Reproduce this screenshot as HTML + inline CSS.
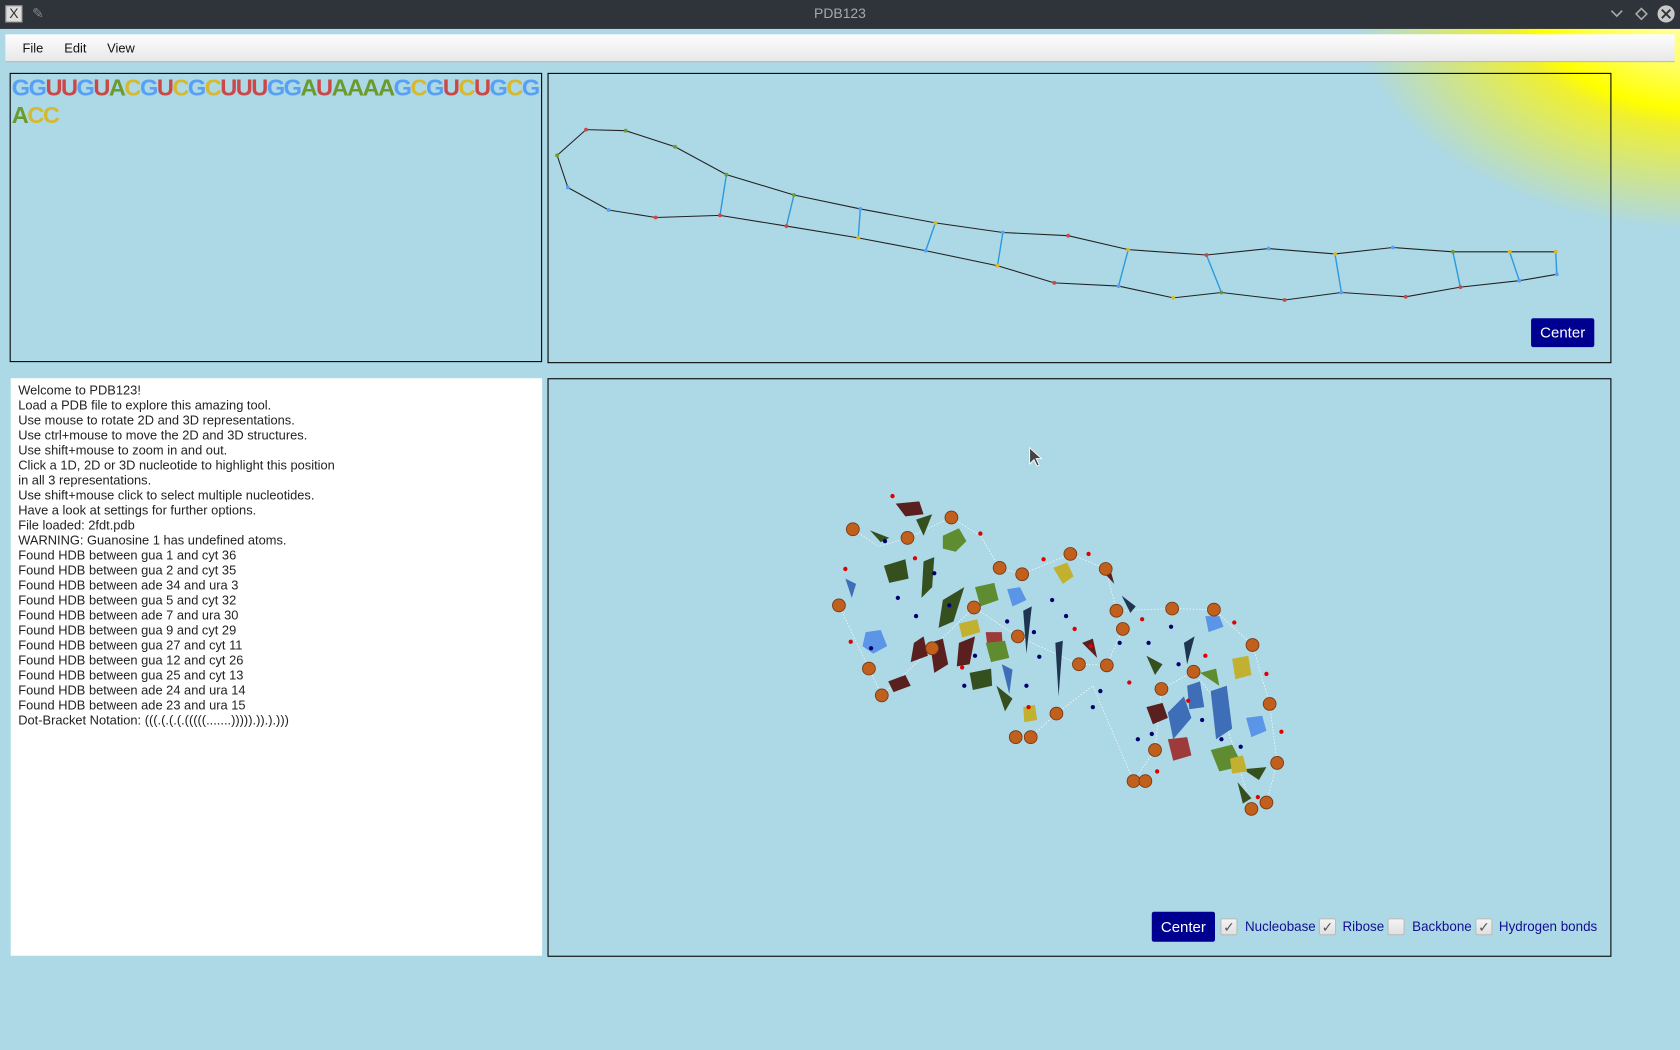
<!DOCTYPE html>
<html><head><meta charset="utf-8"><style>
*{margin:0;padding:0;box-sizing:border-box}
html,body{width:1680px;height:1050px;overflow:hidden;background:#add8e6;font-family:"Liberation Sans","DejaVu Sans",sans-serif}
#w{position:absolute;left:0;top:0;width:1568px;height:980px;transform:scale(1.071429);transform-origin:0 0;background:#add8e6;overflow:hidden}
.abs{position:absolute}
#title{left:0;top:0;width:1568px;height:27px;background:#2f343a;color:#a5a9ad;font-size:13px;text-align:center;line-height:26px;z-index:5}
#menu{left:5px;top:32px;width:1558px;height:26px;background:linear-gradient(#fdfdfd,#e8e8e8);border-bottom:1px solid #bbb;font-size:12px;color:#111;z-index:5}
#menu span{position:absolute;top:6px}
.panel{border:1px solid #000}
#seq{left:9px;top:68px;width:497px;height:270px}
#seq div{position:absolute;left:1px;font-weight:bold;font-size:22px;white-space:nowrap;letter-spacing:-1.4px}
.G{color:#58a0f5}.U{color:#cc4848}.A{color:#6b9a2e}.C{color:#d6b92e}
#log{left:10px;top:353px;width:496px;height:539px;background:#fff;font-size:12px;line-height:14px;padding:4px 0 0 7px;color:#222;white-space:pre}
.btn{background:#000090;color:#fff;font-size:14px;text-align:center;border-radius:2px}
.cb{width:16px;height:16px;border:1px solid #bbb;background:linear-gradient(#f4f4f4,#e0e0e0);border-radius:2px;font-size:13px;color:#555;text-align:center;line-height:15px}
.lbl{color:#101090;font-size:12.5px}
</style></head><body><div id="w">
<div class="abs" style="left:0;top:0;width:1568px;height:400px;background:radial-gradient(ellipse 330px 215px at 1590px 0px,#ffffd0 0%,#ffff60 30%,#ffff00 48%,#f0f030 55%,rgba(173,216,230,0) 100%)"></div>
<div id="title" class="abs">PDB123
<div class="abs" style="left:5px;top:5px;width:16px;height:16px;background:#ddd;border:1px solid #999;color:#333;font-size:13px;line-height:14px">X</div>
<div class="abs" style="left:30px;top:0;color:#888;font-size:13px">✎</div>
<svg class="abs" style="left:1500px;top:4px" width="66" height="20"><path d="M4 6l5 5 5-5" stroke="#aaa" fill="none" stroke-width="1.5"/><path d="M32 4l5 5-5 5-5-5z" stroke="#aaa" fill="none" stroke-width="1.5"/><circle cx="55" cy="9" r="8" fill="#c8c8c8"/><path d="M51 5l8 8M59 5l-8 8" stroke="#2f343a" stroke-width="1.8"/></svg>
</div>
<div id="menu" class="abs"><span style="left:16px">File</span><span style="left:55px">Edit</span><span style="left:95px">View</span></div>

<div id="seq" class="abs panel">
<div style="top:0px"><span class="G">GG</span><span class="U">UU</span><span class="G">G</span><span class="U">U</span><span class="A">A</span><span class="C">C</span><span class="G">G</span><span class="U">U</span><span class="C">C</span><span class="G">G</span><span class="C">C</span><span class="U">UUU</span><span class="G">GG</span><span class="A">A</span><span class="U">U</span><span class="A">AAAA</span><span class="G">G</span><span class="C">C</span><span class="G">G</span><span class="U">U</span><span class="C">C</span><span class="U">U</span><span class="G">G</span><span class="C">C</span><span class="G">G</span></div>
<div style="top:26px"><span class="A">A</span><span class="C">CC</span></div>
</div>

<div class="abs panel" style="left:511px;top:68px;width:993px;height:271px"></div>
<svg class="abs" style="left:0;top:0" width="1568" height="980">
<g fill="none" stroke="#222" stroke-width="1">
<polyline points="520,145 547,121 584,122 630,137 678,163 741,182 803,195 873,208 936,217 997,220 1053,233 1126,238 1184,232 1246,237 1300,231 1356,235 1409,235 1452,235"/>
<polyline points="520,145 530,175 568,196 612,203 672,201 734,211 801,222 864,234 931,248 984,264 1044,267 1095,278 1140,273 1199,280 1252,273 1312,277 1363,268 1418,262 1453,256"/>
</g>
<g stroke="#2a9ae0" stroke-width="1.3">
<line x1="678" y1="163" x2="672" y2="201"/><line x1="741" y1="182" x2="734" y2="211"/><line x1="803" y1="195" x2="801" y2="222"/><line x1="873" y1="208" x2="864" y2="234"/><line x1="936" y1="217" x2="931" y2="248"/><line x1="1053" y1="233" x2="1044" y2="267"/><line x1="1126" y1="238" x2="1140" y2="273"/><line x1="1246" y1="237" x2="1252" y2="273"/><line x1="1356" y1="235" x2="1363" y2="268"/><line x1="1409" y1="235" x2="1418" y2="262"/><line x1="1452" y1="235" x2="1453" y2="256"/>
</g>
<g>
<circle cx="520" cy="145" r="1.8" fill="#6b9a2e"/><circle cx="547" cy="121" r="1.8" fill="#cc4848"/><circle cx="584" cy="122" r="1.8" fill="#6b9a2e"/><circle cx="630" cy="137" r="1.8" fill="#6b9a2e"/><circle cx="678" cy="163" r="1.8" fill="#6b9a2e"/><circle cx="741" cy="182" r="1.8" fill="#6b9a2e"/><circle cx="803" cy="195" r="1.8" fill="#58a0f5"/><circle cx="873" cy="208" r="1.8" fill="#d6b92e"/><circle cx="936" cy="217" r="1.8" fill="#58a0f5"/><circle cx="997" cy="220" r="1.8" fill="#cc4848"/><circle cx="1053" cy="233" r="1.8" fill="#d6b92e"/><circle cx="1126" cy="238" r="1.8" fill="#cc4848"/><circle cx="1184" cy="232" r="1.8" fill="#58a0f5"/><circle cx="1246" cy="237" r="1.8" fill="#d6b92e"/><circle cx="1300" cy="231" r="1.8" fill="#58a0f5"/><circle cx="1356" cy="235" r="1.8" fill="#6b9a2e"/><circle cx="1409" cy="235" r="1.8" fill="#d6b92e"/><circle cx="1452" cy="235" r="1.8" fill="#d6b92e"/>
<circle cx="530" cy="175" r="1.8" fill="#58a0f5"/><circle cx="568" cy="196" r="1.8" fill="#58a0f5"/><circle cx="612" cy="203" r="1.8" fill="#cc4848"/><circle cx="672" cy="201" r="1.8" fill="#cc4848"/><circle cx="734" cy="211" r="1.8" fill="#cc4848"/><circle cx="801" cy="222" r="1.8" fill="#d6b92e"/><circle cx="864" cy="234" r="1.8" fill="#58a0f5"/><circle cx="931" cy="248" r="1.8" fill="#d6b92e"/><circle cx="984" cy="264" r="1.8" fill="#cc4848"/><circle cx="1044" cy="267" r="1.8" fill="#58a0f5"/><circle cx="1095" cy="278" r="1.8" fill="#d6b92e"/><circle cx="1140" cy="273" r="1.8" fill="#6b9a2e"/><circle cx="1199" cy="280" r="1.8" fill="#cc4848"/><circle cx="1252" cy="273" r="1.8" fill="#58a0f5"/><circle cx="1312" cy="277" r="1.8" fill="#cc4848"/><circle cx="1363" cy="268" r="1.8" fill="#cc4848"/><circle cx="1418" cy="262" r="1.8" fill="#58a0f5"/><circle cx="1453" cy="256" r="1.8" fill="#58a0f5"/>
</g>
</svg>
<div class="abs btn" style="left:1429px;top:297px;width:59px;height:27px;line-height:27px">Center</div>

<div id="log" class="abs">Welcome to PDB123!
Load a PDB file to explore this amazing tool.
Use mouse to rotate 2D and 3D representations.
Use ctrl+mouse to move the 2D and 3D structures.
Use shift+mouse to zoom in and out.
Click a 1D, 2D or 3D nucleotide to highlight this position
in all 3 representations.
Use shift+mouse click to select multiple nucleotides.
Have a look at settings for further options.
File loaded: 2fdt.pdb
WARNING: Guanosine 1 has undefined atoms.
Found HDB between gua 1 and cyt 36
Found HDB between gua 2 and cyt 35
Found HDB between ade 34 and ura 3
Found HDB between gua 5 and cyt 32
Found HDB between ade 7 and ura 30
Found HDB between gua 9 and cyt 29
Found HDB between gua 27 and cyt 11
Found HDB between gua 12 and cyt 26
Found HDB between gua 25 and cyt 13
Found HDB between ade 24 and ura 14
Found HDB between ade 23 and ura 15
Dot-Bracket Notation: (((.(.(.(.(((((.......))))).)).).)))</div>

<div class="abs panel" style="left:511px;top:353px;width:993px;height:540px"></div>
<svg class="abs" style="left:0;top:0" width="1568" height="980">
<path d="M961 418v15l4-4 3 6 2-1-3-6h5z" fill="#444" stroke="#fff" stroke-width="0.8"/>
<g stroke="#fff" stroke-width="0.6" stroke-dasharray="1.5 1.5" fill="none">
<polyline points="796,494 820,510 847,502 888,483 915,500 933,530 954,536 999,517 1032,531 1042,570 1094,568 1133,569 1169,602 1185,657 1192,712 1182,749"/>
<polyline points="783,565 811,624 823,649 870,605 909,567 950,594 1007,620 1033,621 1048,587"/>
<polyline points="948,688 962,688 986,666 1020,640 1058,729 1078,700 1084,643 1114,627 1140,660 1168,755"/>
</g>
<g fill="#5a2020"><polygon points="836,470 858,468 862,480 845,482"/><polygon points="853,600 862,594 866,612 850,618"/><polygon points="868,600 880,596 885,620 872,628"/><polygon points="829,636 845,630 850,640 834,646"/><polygon points="1070,660 1085,656 1090,670 1076,676"/><polygon points="1026,530 1035,527 1040,545"/><polygon points="1010,600 1020,596 1024,614"/><polygon points="895,600 910,594 905,620 893,622"/></g>
<g fill="#9e3a3a"><polygon points="1090,690 1108,688 1112,705 1095,710"/><polygon points="920,590 935,590 936,605 922,606"/></g>
<g fill="#354f1e"><polygon points="825,528 845,522 848,540 830,544"/><polygon points="862,524 872,520 870,548 860,558"/><polygon points="880,560 900,548 890,580 876,586"/><polygon points="905,628 925,624 926,640 908,644"/><polygon points="855,485 870,480 862,500"/><polygon points="812,495 830,502 822,506"/><polygon points="930,640 945,652 938,664"/><polygon points="1155,730 1168,745 1160,750"/><polygon points="1160,718 1182,716 1175,728"/><polygon points="1070,612 1085,620 1078,630"/></g>
<g fill="#5f8c30"><polygon points="880,500 895,493 902,505 892,515 880,512"/><polygon points="910,548 928,544 932,560 915,566"/><polygon points="920,600 938,598 942,614 925,618"/><polygon points="1130,700 1150,695 1160,715 1138,720"/><polygon points="1120,628 1135,624 1138,640"/></g>
<g fill="#c2b030"><polygon points="983,530 996,525 1002,538 992,545"/><polygon points="1150,615 1165,612 1168,630 1153,634"/><polygon points="895,582 912,578 915,590 898,595"/><polygon points="955,660 966,658 968,672 956,674"/><polygon points="1148,708 1160,705 1164,720 1150,722"/></g>
<g fill="#5a95e8"><polygon points="808,590 822,588 828,603 815,610 805,603"/><polygon points="940,550 952,548 958,560 945,566"/><polygon points="1163,670 1178,668 1182,682 1168,688"/><polygon points="1125,575 1138,575 1142,585 1128,590"/></g>
<g fill="#3f6eb8"><polygon points="1090,665 1105,650 1112,670 1095,690"/><polygon points="1130,645 1145,640 1150,680 1135,690"/><polygon points="1108,640 1120,636 1124,660 1110,662"/><polygon points="789,540 799,545 795,558"/><polygon points="935,620 945,625 942,648"/></g>
<g fill="#1e3450"><polygon points="955,570 963,566 958,610"/><polygon points="985,600 992,598 988,650"/><polygon points="1047,556 1060,566 1055,572"/><polygon points="1105,600 1115,594 1108,620"/></g>
<g fill="#c0601c" stroke="#7a3510" stroke-width="0.8">
<circle cx="796" cy="494" r="6"/><circle cx="888" cy="483" r="6"/><circle cx="847" cy="502" r="6"/><circle cx="933" cy="530" r="6"/><circle cx="954" cy="536" r="6"/><circle cx="999" cy="517" r="6"/><circle cx="1032" cy="531" r="6"/><circle cx="783" cy="565" r="6"/><circle cx="811" cy="624" r="6"/><circle cx="823" cy="649" r="6"/><circle cx="870" cy="605" r="6"/><circle cx="909" cy="567" r="6"/><circle cx="950" cy="594" r="6"/><circle cx="1007" cy="620" r="6"/><circle cx="1033" cy="621" r="6"/><circle cx="948" cy="688" r="6"/><circle cx="962" cy="688" r="6"/><circle cx="986" cy="666" r="6"/><circle cx="1042" cy="570" r="6"/><circle cx="1048" cy="587" r="6"/><circle cx="1094" cy="568" r="6"/><circle cx="1133" cy="569" r="6"/><circle cx="1169" cy="602" r="6"/><circle cx="1185" cy="657" r="6"/><circle cx="1192" cy="712" r="6"/><circle cx="1182" cy="749" r="6"/><circle cx="1168" cy="755" r="6"/><circle cx="1058" cy="729" r="6"/><circle cx="1069" cy="729" r="6"/><circle cx="1078" cy="700" r="6"/><circle cx="1084" cy="643" r="6"/><circle cx="1114" cy="627" r="6"/>
</g>
<g fill="#e00000">
<circle cx="833" cy="463" r="2"/><circle cx="854" cy="521" r="2"/><circle cx="789" cy="531" r="2"/><circle cx="794" cy="599" r="2"/><circle cx="915" cy="498" r="2"/><circle cx="1016" cy="517" r="2"/><circle cx="974" cy="522" r="2"/><circle cx="1003" cy="587" r="2"/><circle cx="1018" cy="603" r="2"/><circle cx="1066" cy="578" r="2"/><circle cx="1152" cy="581" r="2"/><circle cx="1182" cy="629" r="2"/><circle cx="1196" cy="683" r="2"/><circle cx="1080" cy="720" r="2"/><circle cx="1054" cy="637" r="2"/><circle cx="960" cy="660" r="2"/><circle cx="898" cy="623" r="2"/><circle cx="1174" cy="744" r="2"/><circle cx="1109" cy="654" r="2"/><circle cx="1125" cy="612" r="2"/>
</g>
<g fill="#00006e">
<circle cx="826" cy="505" r="2"/><circle cx="872" cy="535" r="2"/><circle cx="838" cy="558" r="2"/><circle cx="886" cy="565" r="2"/><circle cx="910" cy="612" r="2"/><circle cx="940" cy="580" r="2"/><circle cx="965" cy="590" r="2"/><circle cx="982" cy="560" r="2"/><circle cx="995" cy="575" r="2"/><circle cx="1020" cy="660" r="2"/><circle cx="1045" cy="600" r="2"/><circle cx="1072" cy="600" r="2"/><circle cx="1100" cy="620" r="2"/><circle cx="1122" cy="672" r="2"/><circle cx="1140" cy="690" r="2"/><circle cx="1062" cy="690" r="2"/><circle cx="1158" cy="697" r="2"/><circle cx="1075" cy="685" r="2"/><circle cx="958" cy="640" r="2"/><circle cx="900" cy="640" r="2"/><circle cx="855" cy="575" r="2"/><circle cx="813" cy="605" r="2"/><circle cx="970" cy="613" r="2"/><circle cx="1027" cy="645" r="2"/><circle cx="1093" cy="585" r="2"/>
</g>
</svg>
<div class="abs btn" style="left:1075px;top:851px;width:59px;height:28px;line-height:28px">Center</div>
<div class="abs cb" style="left:1139px;top:857px">✓</div><div class="abs lbl" style="left:1162px;top:858px">Nucleobase</div>
<div class="abs cb" style="left:1231px;top:857px">✓</div><div class="abs lbl" style="left:1253px;top:858px">Ribose</div>
<div class="abs cb" style="left:1295px;top:857px"></div><div class="abs lbl" style="left:1318px;top:858px">Backbone</div>
<div class="abs cb" style="left:1377px;top:857px">✓</div><div class="abs lbl" style="left:1399px;top:858px">Hydrogen bonds</div>
</div></body></html>
